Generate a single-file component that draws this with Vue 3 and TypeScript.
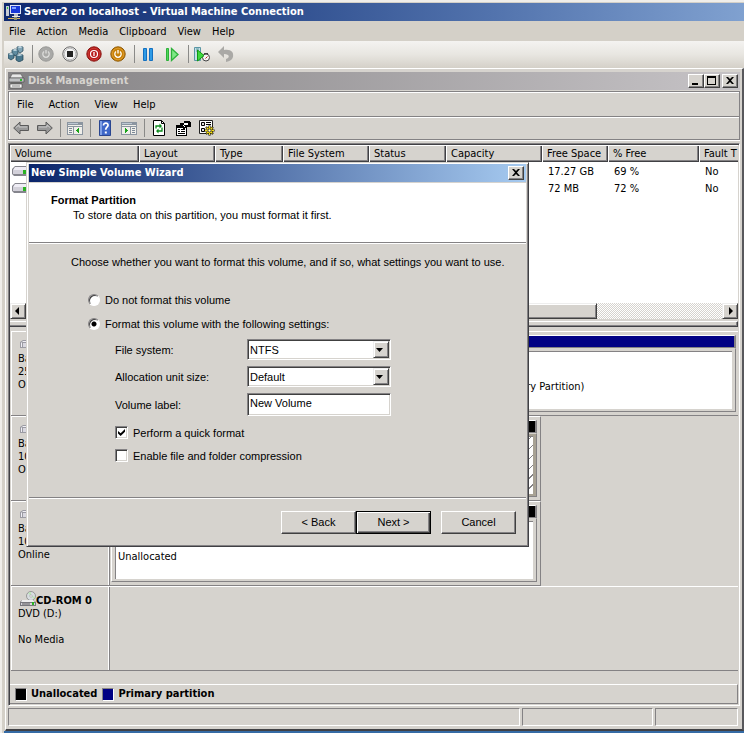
<script setup lang="ts">
import { ref } from 'vue'

interface Volume { free: string; percent: string; fault: string }
interface Disk { name: string; kind: string; size: string; state: string }

const hostMenu = ['File', 'Action', 'Media', 'Clipboard', 'View', 'Help']
const consoleMenu = ['File', 'Action', 'View', 'Help']
const columns = ['Volume', 'Layout', 'Type', 'File System', 'Status', 'Capacity', 'Free Space', '% Free', 'Fault T']
const volumes: Volume[] = [
  { free: '17.27 GB', percent: '69 %', fault: 'No' },
  { free: '72 MB', percent: '72 %', fault: 'No' },
]
const disks: Disk[] = [
  { name: 'Disk 0', kind: 'Basic', size: '25.00 GB', state: 'Online' },
  { name: 'Disk 1', kind: 'Basic', size: '10.00 GB', state: 'Online' },
  { name: 'Disk 2', kind: 'Basic', size: '10.00 GB', state: 'Online' },
]

const formatMode = ref<'none' | 'format'>('format')
const fileSystem = ref('NTFS')
const unitSize = ref('Default')
const volumeLabel = ref('New Volume')
const quickFormat = ref(true)
const compression = ref(false)
</script>

<template>
  <div class="host">
    <header class="host-title">
      <svg class="i16" viewBox="0 0 16 16" aria-hidden="true">
        <path d="M0 2h3v10H0z" fill="#c8ccd4" /><path d="M1 3h1v2H1z" fill="#3c4" /><path d="M4 1h11v9H4z" fill="#dfe5f4" /><path d="M5 2h9v7H5z" fill="#1839d8" /><path d="M6 3h4v2H6z" fill="#7fa2ff" /><path d="M8 10h4v2H8z" fill="#b9bdc8" /><path d="M6 12h8v1H6z" fill="#e8e8e8" /><path d="M2 14h12v1H2z" fill="#d9b45a" /><path d="M8 13h3v3H8z" fill="#8a8f70" />
      </svg>
      <h1>Server2 on localhost - Virtual Machine Connection</h1>
    </header>
    <nav class="menu host-menu">
      <button v-for="m in hostMenu" :key="m" type="button">{{ m }}</button>
    </nav>
    <div class="tools host-tools">
      <button type="button" aria-label="Ctrl+Alt+Delete">
        <svg class="i16" viewBox="0 0 16 16">
          <g stroke="#1d3f52" stroke-width=".7">
            <path d="M9 1l3-1 3 1v4l-3 2-3-2z" fill="#7ea3b5" /><path d="M4 4l3-1 3 1v4L7 10 4 8z" fill="#5f8ba0" /><path d="M0 8l3-1 3 1v4l-3 2-3-2z" fill="#527f95" /><path d="M8 9l4-1 3 1v5l-4 2-3-2z" fill="#48768c" />
          </g>
          <path d="M9 1l3-1 3 1-3 1zM4 4l3-1 3 1-3 1zM0 8l3-1 3 1-3 1zM8 9l4-1 3 1-4 1z" fill="#c9dde6" />
        </svg>
      </button>
      <i class="sep" />
      <button type="button" aria-label="Start" disabled>
        <svg class="i16" viewBox="0 0 16 16"><circle cx="8" cy="8" r="7.2" fill="#a9a9a7" stroke="#989896" /><path d="M6 5.600a3.200 3.200 0 1 0 4 0M8 4v3.500" fill="none" stroke="#dededc" stroke-width="1.3" /></svg>
      </button>
      <button type="button" aria-label="Turn Off">
        <svg class="i16" viewBox="0 0 16 16"><circle cx="8" cy="8" r="7.2" fill="#f2f2f2" stroke="#666" /><circle cx="8" cy="8" r="5.8" fill="none" stroke="#bbb" /><path d="M5 5h6v6H5z" fill="#222" /></svg>
      </button>
      <button type="button" aria-label="Shut Down">
        <svg class="i16" viewBox="0 0 16 16"><circle cx="8" cy="8" r="7.2" fill="#b81a1a" stroke="#8a1a16" /><circle cx="8" cy="8" r="5.800" fill="none" stroke="#c83a34" /><circle cx="8" cy="8" r="3.500" fill="none" stroke="#fff" stroke-width="1.2" /><path d="M8 6v4" stroke="#fff" stroke-width="1.3" /></svg>
      </button>
      <button type="button" aria-label="Save">
        <svg class="i16" viewBox="0 0 16 16"><circle cx="8" cy="8" r="7.2" fill="#c88208" stroke="#8f5a08" /><circle cx="8" cy="8" r="5.800" fill="none" stroke="#dd9a2c" /><path d="M6 5.600a3.200 3.200 0 1 0 4 0M8 4v3.500" fill="none" stroke="#fff" stroke-width="1.3" /></svg>
      </button>
      <i class="sep" />
      <button type="button" aria-label="Pause">
        <svg class="i16" viewBox="0 0 16 16"><path d="M3.500 2.500h3v12h-3zM9.500 2.500h3v12h-3z" fill="#2f9be6" stroke="#1470c0" /></svg>
      </button>
      <button type="button" aria-label="Reset">
        <svg class="i16" viewBox="0 0 16 16"><path d="M2.500 2.500h2v12h-2z" fill="#4fd65a" stroke="#2db13a" /><path d="M7.500 2.500v12l6.500-6z" fill="#7fe886" stroke="#2db13a" stroke-width="1.300" /></svg>
      </button>
      <i class="sep" />
      <button type="button" aria-label="Snapshot">
        <svg class="i16" viewBox="0 0 16 16"><path d="M.5 1.500h6v13h-6z" fill="#c5dfe6" stroke="#5b97a5" /><path d="M2 3h3M2 5h3" stroke="#5b97a5" /><circle cx="12" cy="11.500" r="3.500" fill="#f4f4f4" stroke="#444" /><path d="M11.500 12.500l2-2" stroke="#b22" /><path d="M10 7.500h4" stroke="#444" /><path d="M3.500 4v11l6.500-5.500z" fill="#3fd83f" stroke="#119911" /></svg>
      </button>
      <button type="button" aria-label="Revert" disabled>
        <svg class="i16" viewBox="0 0 16 16"><path d="M0 6l6-6v4c7-1 10 2 9 7-1 3-3 4-7 5v-3c4-1 4-5-2-5v4z" fill="#aaa9a6" /></svg>
      </button>
    </div>

    <section class="console">
      <header class="console-title">
        <svg class="i16" viewBox="0 0 16 16" aria-hidden="true"><path d="M3 1h9l2 4H1z" fill="#e8e8e8" stroke="#555" stroke-width=".6" /><path d="M0 5h15v4H0z" fill="#bfc1c3" stroke="#444" stroke-width=".6" /><path d="M11 6h2v2h-2z" fill="#2dba2d" /><path d="M1 11h12v4H1z" fill="#f4f4f4" stroke="#444" stroke-width=".6" /><path d="M2 9h11v2H2z" fill="#666" /><path d="M3 13h8" stroke="#888" /></svg>
        <h2>Disk Management</h2>
        <div class="caption">
          <button type="button" aria-label="Minimize"><svg viewBox="0 0 12 10"><path d="M2 7h6v2H2z" /></svg></button>
          <button type="button" aria-label="Maximize"><svg viewBox="0 0 12 10"><path fill-rule="evenodd" d="M1 0h9v9H1zM2 2v6h7V2z" /></svg></button>
          <button class="close" type="button" aria-label="Close"><svg viewBox="0 0 12 10"><path d="M2 1h2l2 2 2-2h2L7 4.500 10 8H8L6 6 4 8H2l3-3.500z" /></svg></button>
        </div>
      </header>

      <div class="bars">
        <nav class="menu console-menu">
          <button v-for="m in consoleMenu" :key="m" type="button">{{ m }}</button>
        </nav>
        <div class="tools console-tools">
          <button type="button" aria-label="Back"><svg class="i16" viewBox="0 0 16 16"><path d="M.7 8L7 2v3.500h8.500v5H7V14z" fill="#999" stroke="#5a5a5a" /><path d="M3 7.500L6 5v2h8" fill="none" stroke="#c8c8c8" /></svg></button>
          <button type="button" aria-label="Forward"><svg class="i16" viewBox="0 0 16 16"><path d="M15.300 8L9 2v3.500H.5v5H9V14z" fill="#999" stroke="#5a5a5a" /><path d="M2 7h8V5l3 2.500" fill="none" stroke="#c8c8c8" /></svg></button>
          <i class="sep" />
          <button type="button" aria-label="Show console tree"><svg class="i16" viewBox="0 0 16 16" shape-rendering="crispEdges"><path d="M0 2h16v13H0z" fill="#8b95a0" /><path d="M1 5h14v1H1zM1 7h5v7H1zM7 7h8v7H7z" fill="#f0efea" /><path d="M1 3h10v1H1z" fill="#bcc7d2" /><path d="M2 8h3v1H2zM2 10h3v1H2zM2 12h3v1H2z" fill="#7b8796" /><path d="M12 8v5L9 10.500z" fill="#19a319" /></svg></button>
          <i class="sep" />
          <button type="button" aria-label="Help"><svg class="i16" viewBox="0 0 16 16"><path d="M2.500.5h11v15h-11z" fill="#3e67c8" stroke="#2a4690" /><path d="M3 1h2v14H3z" fill="#7fa0e6" /><path d="M6.500 5.500c0-3.500 5-3 4.500 0-.3 1.800-2.300 1.700-2.300 4.300" fill="none" stroke="#fff" stroke-width="1.700" /><path d="M7.800 11.500h2v2h-2z" fill="#fff" /></svg></button>
          <button type="button" aria-label="Show action pane"><svg class="i16" viewBox="0 0 16 16" shape-rendering="crispEdges"><path d="M0 2h16v13H0z" fill="#8b95a0" /><path d="M1 5h14v1H1zM1 7h8v7H1zM10 7h5v7h-5z" fill="#f0efea" /><path d="M1 3h10v1H1z" fill="#bcc7d2" /><path d="M11 8h3v1h-3zM11 10h3v1h-3zM11 12h3v1h-3z" fill="#7b8796" /><path d="M4 8v5l3-2.500z" fill="#19a319" /></svg></button>
          <i class="sep" />
          <button type="button" aria-label="Refresh"><svg class="i16" viewBox="0 0 16 16"><path d="M2.500.5h8l3 3v12h-11z" fill="#fff" stroke="#000" /><path d="M10.500.5v3h3" fill="none" stroke="#000" /><path d="M5 8.500V6h4M11 7.500V11H7" fill="none" stroke="#0a8a1a" stroke-width="1.300" /><path d="M8.500 3.500v5L11 6zM7.500 8.500v5L5 11z" fill="#0a8a1a" /></svg></button>
          <button type="button" aria-label="Properties"><svg class="i16" viewBox="0 0 16 16" shape-rendering="crispEdges"><path d="M1 5h11v11H1z" fill="#000" /><path d="M2 8h9v7H2z" fill="#fff" /><path d="M3 9h2v1H3zM6 9h4v1H6zM3 11h2v1H3zM6 11h4v1H6zM3 13h7v1H3z" fill="#000" /><path d="M5 3h4V1h5l2 1v5h-4l-3 2-3-2 2-2H5z" fill="#000" /><path d="M9 3h4v2H8v1h3l-2 1z" fill="#fff" /></svg></button>
          <button type="button" aria-label="Settings"><svg class="i16" viewBox="0 0 16 16"><path d="M.5.500h13v13H.5z" fill="#fff" stroke="#222" /><path d="M2.500 2.500h3v3h-3zM2.500 8.500h3v3h-3z" fill="#ddd" stroke="#000" /><path d="M7 2.500h5M7 4.500h5M7 8h3" stroke="#000" /><path d="M10.500 5.500v10M5.500 10.500h10M7 7l7 7M14 7l-7 7" stroke="#000" stroke-width="2.200" /><path d="M10.500 6v9M6 10.500h9M7.500 7.500l6 6M13.500 7.500l-6 6" stroke="#f3dc1c" stroke-width="1.400" /><circle cx="10.500" cy="10.500" r="1.500" fill="#fff" stroke="#000" stroke-width=".7" /></svg></button>
        </div>
      </div>

      <main class="pane">
        <div class="list">
          <table>
            <colgroup><col v-for="(c, i) in columns" :key="c" :class="'c' + i" /></colgroup>
            <thead><tr><th v-for="c in columns" :key="c" scope="col">{{ c }}</th></tr></thead>
            <tbody>
              <tr v-for="v in volumes" :key="v.free">
                <td><svg class="drive" viewBox="0 0 16 16" aria-hidden="true"><path d="M3 3h11l2 3v5l-2 2H2l-2-2V6z" fill="#85858d" /><path d="M3 4h11l1 3H1z" fill="#efedf5" /><path d="M1 7h14v4H1z" fill="#d3d1da" /><path d="M11 7h3v4h-3z" fill="#29b321" /></svg></td>
                <td /><td /><td /><td /><td />
                <td>{{ v.free }}</td><td>{{ v.percent }}</td><td>{{ v.fault }}</td>
              </tr>
            </tbody>
          </table>
        </div>
        <div class="scroll">
          <button type="button" aria-label="Scroll left"><svg viewBox="0 0 12 12"><path d="M7 2v8L3 6z" /></svg></button>
          <div class="track"><div class="thumb" /></div>
          <button type="button" aria-label="Scroll right"><svg viewBox="0 0 12 12"><path d="M5 2v8l4-4z" /></svg></button>
        </div>
        <div class="splitter" />

        <div class="disks">
          <article v-for="(d, i) in disks" :key="d.name" class="disk" :class="{ short: i > 0 }">
            <div class="disk-label">
              <h3><svg class="i16" viewBox="0 0 16 16" aria-hidden="true"><path d="M3 4h10l3 2v6H0V6z" fill="#9b9ba3" /><path d="M3 5h10v1H2v5H1V7z" fill="#f0eff5" /><path d="M3 7h9v4H3z" fill="#d9d8e0" /><path d="M11 8h3v3h-3z" fill="#29b321" /></svg>{{ d.name }}</h3>
              <p>{{ d.kind }}</p><p>{{ d.size }}</p><p>{{ d.state }}</p>
            </div>
            <div class="parts">
              <div v-if="i === 0" class="part reserved"><div class="band primary" /><div class="body"><div class="well" /></div></div>
              <div class="part" :class="{ chosen: i === 1 }">
                <div class="band" :class="{ primary: i === 0 }" />
                <div class="body">
                  <div class="well" :class="{ boot: i === 0 }">
                    <p v-if="i === 0">Healthy (Boot, Page File, Crash Dump, Primary Partition)</p>
                    <p v-if="i === 2">Unallocated</p>
                  </div>
                </div>
              </div>
            </div>
          </article>
          <article class="disk cd">
            <div class="disk-label">
              <h3><svg class="i16" viewBox="0 0 16 16" aria-hidden="true"><circle cx="11" cy="5" r="4.500" fill="#d8dde0" stroke="#888" stroke-width=".8" /><path d="M11 5L8 2l3-1zM11 5l4 1-1 2z" fill="#b9e6b4" /><circle cx="11" cy="5" r="1.200" fill="#fff" stroke="#888" stroke-width=".5" /><path d="M2 9h11l3 2v4H0v-4z" fill="#77777d" /><path d="M2 9h11l2 2H1z" fill="#eee" /><path d="M1 12h14v2H1z" fill="#d6d4dc" /><path d="M2 13h8" stroke="#555" /><path d="M12 11h2v3h-2z" fill="#29b321" /></svg>CD-ROM 0</h3>
              <p>DVD (D:)</p><p>&nbsp;</p><p>No Media</p>
            </div>
          </article>
        </div>

        <footer class="legend">
          <i class="swatch" /><span>Unallocated</span>
          <i class="swatch navy" /><span>Primary partition</span>
        </footer>
      </main>

      <div class="status"><div /><div /><div /></div>
    </section>

    <form class="wizard" @submit.prevent>
      <header class="wizard-title">
        <h2>New Simple Volume Wizard</h2>
        <div class="caption"><button type="button" aria-label="Close wizard"><svg viewBox="0 0 12 10"><path d="M2 1h2l2 2 2-2h2L7 4.500 10 8H8L6 6 4 8H2l3-3.500z" /></svg></button></div>
      </header>
      <div class="intro">
        <h3>Format Partition</h3>
        <p>To store data on this partition, you must format it first.</p>
      </div>
      <div class="settings">
        <p>Choose whether you want to format this volume, and if so, what settings you want to use.</p>
        <label class="choice"><input v-model="formatMode" type="radio" name="mode" value="none" />Do not format this volume</label>
        <label class="choice"><input v-model="formatMode" type="radio" name="mode" value="format" />Format this volume with the following settings:</label>
        <div class="fields">
          <label for="fs">File system:</label>
          <div class="combo"><select id="fs" v-model="fileSystem"><option>NTFS</option></select><i><svg viewBox="0 0 12 12"><path d="M2 4h7L5.500 8z" /></svg></i></div>
          <label for="unit">Allocation unit size:</label>
          <div class="combo"><select id="unit" v-model="unitSize"><option>Default</option></select><i><svg viewBox="0 0 12 12"><path d="M2 4h7L5.500 8z" /></svg></i></div>
          <label for="label">Volume label:</label>
          <input id="label" v-model="volumeLabel" type="text" />
        </div>
        <label class="check"><input v-model="quickFormat" type="checkbox" />Perform a quick format</label>
        <label class="check"><input v-model="compression" type="checkbox" />Enable file and folder compression</label>
      </div>
      <div class="actions">
        <button type="button">&lt; Back</button>
        <button class="default" type="submit">Next &gt;</button>
        <button class="cancel" type="button">Cancel</button>
      </div>
    </form>
  </div>
</template>

<style>
body { background: #d4d0c8; }
</style>

<style scoped>
* { box-sizing: border-box; }
h1, h2, h3, p { margin: 0; font-size: inherit; }
button { font: inherit; color: inherit; padding: 0; border: 0; background: none; display: flex; align-items: center; justify-content: center; }
svg { display: block; flex: none; }
.i16 { width: 16px; height: 16px; }
.host { position: relative; display: flex; flex-direction: column; min-height: 100vh; padding: 3px 0 2px 4px; background: linear-gradient(#356ba5, #356ba5) 4px 100% / 100% 2px no-repeat #d4d0c8; box-shadow: inset 0 2px #f0eeea, inset 2px 0 #f0eeea; font: 11px/14px "DejaVu Sans Condensed", "DejaVu Sans", sans-serif; color: #000; overflow: hidden; }
.host-title { height: 18px; display: flex; align-items: center; gap: 2px; padding-left: 2px; color: #fff; background: linear-gradient(90deg, #0f296f, #2b4a8b 33%, #5273ad 66%, #80a1d0); }
h1, h2 { font-weight: bold; white-space: nowrap; }
.menu { display: flex; align-items: center; }
.host-menu { height: 20px; padding: 1px 0 0 5px; gap: 11px; }
.tools { display: flex; align-items: center; }
.tools button { width: 24px; height: 24px; }
.sep { width: 6px; height: 18px; flex: none; background: linear-gradient(#8a8a88, #8a8a88) 3px 0 / 1px 100% no-repeat; }
.host-tools { height: 27px; padding-bottom: 2px; background: linear-gradient(#f4f3f1, #e8e6e1 50%, #d4d0c8); }
.host-tools .sep { background-position: 4px 0; }

.console { flex: 1; display: flex; flex-direction: column; background: #d6d3ce; padding: 3px 2px 3px 2px; border: solid; border-width: 1px 2px 2px 1px; border-color: #fff #58585c #404044 #fff; margin-left: 1px; }
.console-title { height: 18px; display: flex; align-items: center; gap: 3px; padding: 0 2px 0 1px; color: #d6d3ce; background: linear-gradient(90deg, #848284, #c6c3c6); }
.caption { margin-left: auto; display: flex; }
.caption button { width: 16px; height: 14px; background: #d6d3ce; border: 1px solid; border-color: #fff #404040 #404040 #fff; box-shadow: inset -1px -1px #848284; }
.caption svg { width: 12px; height: 10px; }
.caption .close { margin-left: 2px; }
.bars { margin-top: 1px; border: 1px solid #848284; box-shadow: inset 1px 1px #fff, 0 1px #fff; }
.console-menu { height: 24px; padding: 2px 8px 0; gap: 15px; }
.console-tools { height: 23px; border-top: 1px solid #848284; box-shadow: inset 0 1px #fff; }

.pane { flex: 1; display: flex; flex-direction: column; margin: 3px 0 2px; border: 1px solid; border-color: #848284 #fff #fff #848284; box-shadow: inset 1px 1px #404044; padding: 1px; }
.list { background: #fff; height: 158px; overflow: hidden; }
table { width: 100%; table-layout: fixed; border-collapse: collapse; }
th, td { padding: 0 0 0 6px; text-align: left; font-weight: normal; white-space: nowrap; overflow: hidden; }
th { height: 17px; padding: 1px 0 0 5px; background: #d6d3ce; box-shadow: inset 1px 1px #fff, inset -1px -1px #404044, inset -2px -2px #848284; }
th:last-child { box-shadow: inset 1px 1px #fff, inset 0 -1px #404044, inset 0 -2px #848284; }
td { height: 17px; padding: 2px 0 0 6px; }
td:first-child { padding: 1px 0 0 2px; }
.drive { width: 16px; height: 16px; }
.c0 { width: 129px; } .c1 { width: 76px; } .c2 { width: 68px; } .c3 { width: 86px; } .c4 { width: 77px; }
.c5 { width: 96px; } .c6 { width: 66px; } .c7 { width: 91px; }
.scroll { display: flex; height: 16px; }
.scroll button, .combo i { width: 16px; background: #d6d3ce; border: 1px solid; border-color: #eee #404040 #404040 #eee; box-shadow: inset 1px 1px #fff, inset -1px -1px #848284; }
.scroll svg { width: 12px; height: 12px; }
.track { flex: 1; background: repeating-conic-gradient(#fff 0 25%, #d6d3ce 0 50%) 0 0 / 2px 2px; }
.thumb { width: 82%; height: 16px; background: #d6d3ce; border: 1px solid; border-color: #eee #404040 #404040 #eee; box-shadow: inset 1px 1px #fff, inset -1px -1px #848284; }
.splitter { height: 6px; margin-top: 2px; border: solid; border-width: 1px 1px 1px 0; border-color: #fff #404044 #404044; box-shadow: inset -1px -1px #848284; }

.disks { flex: 1; margin: 4px 0 0 1px; }
.disk { display: flex; height: 85px; border: solid; border-width: 1px 0; border-color: #fff #848284 #848284; }
.disk.short { width: 530px; border-right-width: 1px; }
.disk-label { width: 99px; flex: none; padding: 4px 0 0 6px; border: solid; border-width: 0 1px; border-color: #fff #848284 #fff #fff; box-shadow: inset -1px 0 #fff; }
.disk-label h3 { display: flex; align-items: end; padding-left: 2px; height: 16px; line-height: 13px; }
.disk-label p { line-height: 14px; height: 13px; }
.parts { flex: 1; display: flex; padding: 3px 2px 3px 1px; }
.short .parts { padding-right: 3px; }
.part { flex: 1; display: flex; flex-direction: column; }
.reserved { flex: 0 0 152px; }
.band { height: 13px; background: #000; border: solid; border-width: 1px 2px 1px 0; border-color: #fff #848284 #848284; }
.band.primary { background: #000084; }
.body { flex: 1; padding: 2px 3px; border: 1px solid; border-color: #d6d3ce #848284 #848284 #fff; }
.well { height: 100%; background: #fff; border: solid; border-width: 1px 0 0 1px; border-color: #848284; padding: 28px 2px 0; white-space: nowrap; }
.boot { padding-left: 38px; }
.chosen .body { background: #a8a294; }
.chosen .well { background: repeating-linear-gradient(135deg, #fff 0 6px, #848284 6px 7px); }
.legend { display: flex; align-items: center; height: 20px; padding-left: 5px; font-weight: bold; border: solid; border-width: 1px 1px 1px 0; border-color: #fff #848284 #848284; }
.swatch { width: 12px; height: 13px; margin-right: 4px; background: #000; border: 1px solid; border-color: #848284 #fff #fff #848284; }
.legend span + .swatch { margin-left: 5px; }
.legend .navy { background: #000084; }
.status { height: 18px; display: flex; gap: 2px; }
.status div { flex: 0 0 131px; border: 1px solid; border-color: #848284 #fff #fff #848284; }
.status div:first-child { flex: 1; }
.status div:last-child { flex-basis: 83px; margin-right: 2px; }

.wizard { position: absolute; left: 26px; top: 162px; width: 503px; padding: 1px 1px 9px; background: #d6d3ce; border: 1px solid; border-color: #d6d3ce #404044 #404044 #d6d3ce; box-shadow: inset 1px 1px #fff, inset -1px -1px #848284; font-family: "Liberation Sans", Arial, sans-serif; }
.wizard-title { height: 18px; margin: 0 1px 1px; display: flex; align-items: center; padding: 0 2px; color: #fff; font-family: "DejaVu Sans Condensed", "DejaVu Sans", sans-serif; background: linear-gradient(90deg, #0a246a, #a6caf0); }
.intro { height: 60px; margin: 0 1px; padding: 10px 22px; background: #fff; border-bottom: 1px solid #848284; box-shadow: 0 1px #fff; }
.intro h3 { line-height: 15px; }
.intro p { padding-left: 22px; line-height: 15px; }
.settings { height: 255px; margin: 0 1px; padding: 12px 42px 0; border-bottom: 1px solid #848284; box-shadow: 0 1px #fff; }
.settings p { white-space: nowrap; margin-bottom: 19px; }
.choice { display: flex; align-items: center; gap: 5px; height: 24px; margin-left: 17px; }
input[type="radio"], input[type="checkbox"] { appearance: none; margin: 0; flex: none; background: #fff; }
input[type="radio"] { width: 12px; height: 12px; border-radius: 50%; border: 1px solid; border-color: #848284 #fff #fff #848284; box-shadow: inset 1px 1px #404040; }
input[type="radio"]:checked { background: radial-gradient(circle at 5px 5px, #000 2px, #fff 3px); }
.fields { display: grid; grid-template-columns: 132px 144px; row-gap: 6px; align-items: center; margin: 3px 0 5px 44px; }
.combo { position: relative; height: 21px; }
select, input[type="text"] { width: 100%; height: 21px; font: inherit; color: #000; background: #fff; margin: 0; padding: 0 2px; appearance: none; border: 1px solid; border-color: #848284 #fff #fff #848284; border-radius: 0; box-shadow: inset 1px 1px #404040, inset -1px -1px #d6d3ce; }
input[type="text"] { height: 23px; padding-bottom: 3px; }
.combo i { position: absolute; top: 2px; right: 2px; height: 17px; display: flex; align-items: center; pointer-events: none; }
.combo svg { width: 12px; height: 12px; }
.check { display: flex; align-items: center; gap: 5px; height: 23px; margin-left: 44px; }
input[type="checkbox"] { width: 13px; height: 13px; border: 1px solid; border-color: #848284 #fff #fff #848284; box-shadow: inset 1px 1px #404040, inset -1px -1px #d6d3ce; position: relative; }
input[type="checkbox"]:checked::after { content: ""; position: absolute; left: 2px; top: 2px; width: 7px; height: 7px; background: #000; clip-path: polygon(0 28%, 38% 62%, 100% 0, 100% 40%, 38% 100%, 0 66%); }
.actions { display: flex; justify-content: flex-end; padding: 13px 11px 3px 0; }
.actions button { width: 75px; height: 23px; padding-bottom: 1px; border: 1px solid; border-color: #fff #404040 #404040 #fff; box-shadow: inset -1px -1px #848284; }
.actions .default { border-color: #000; box-shadow: inset 1px 1px #fff, inset -1px -1px #404040, inset -2px -2px #848284; }
.actions .cancel { margin-left: 10px; }
</style>
